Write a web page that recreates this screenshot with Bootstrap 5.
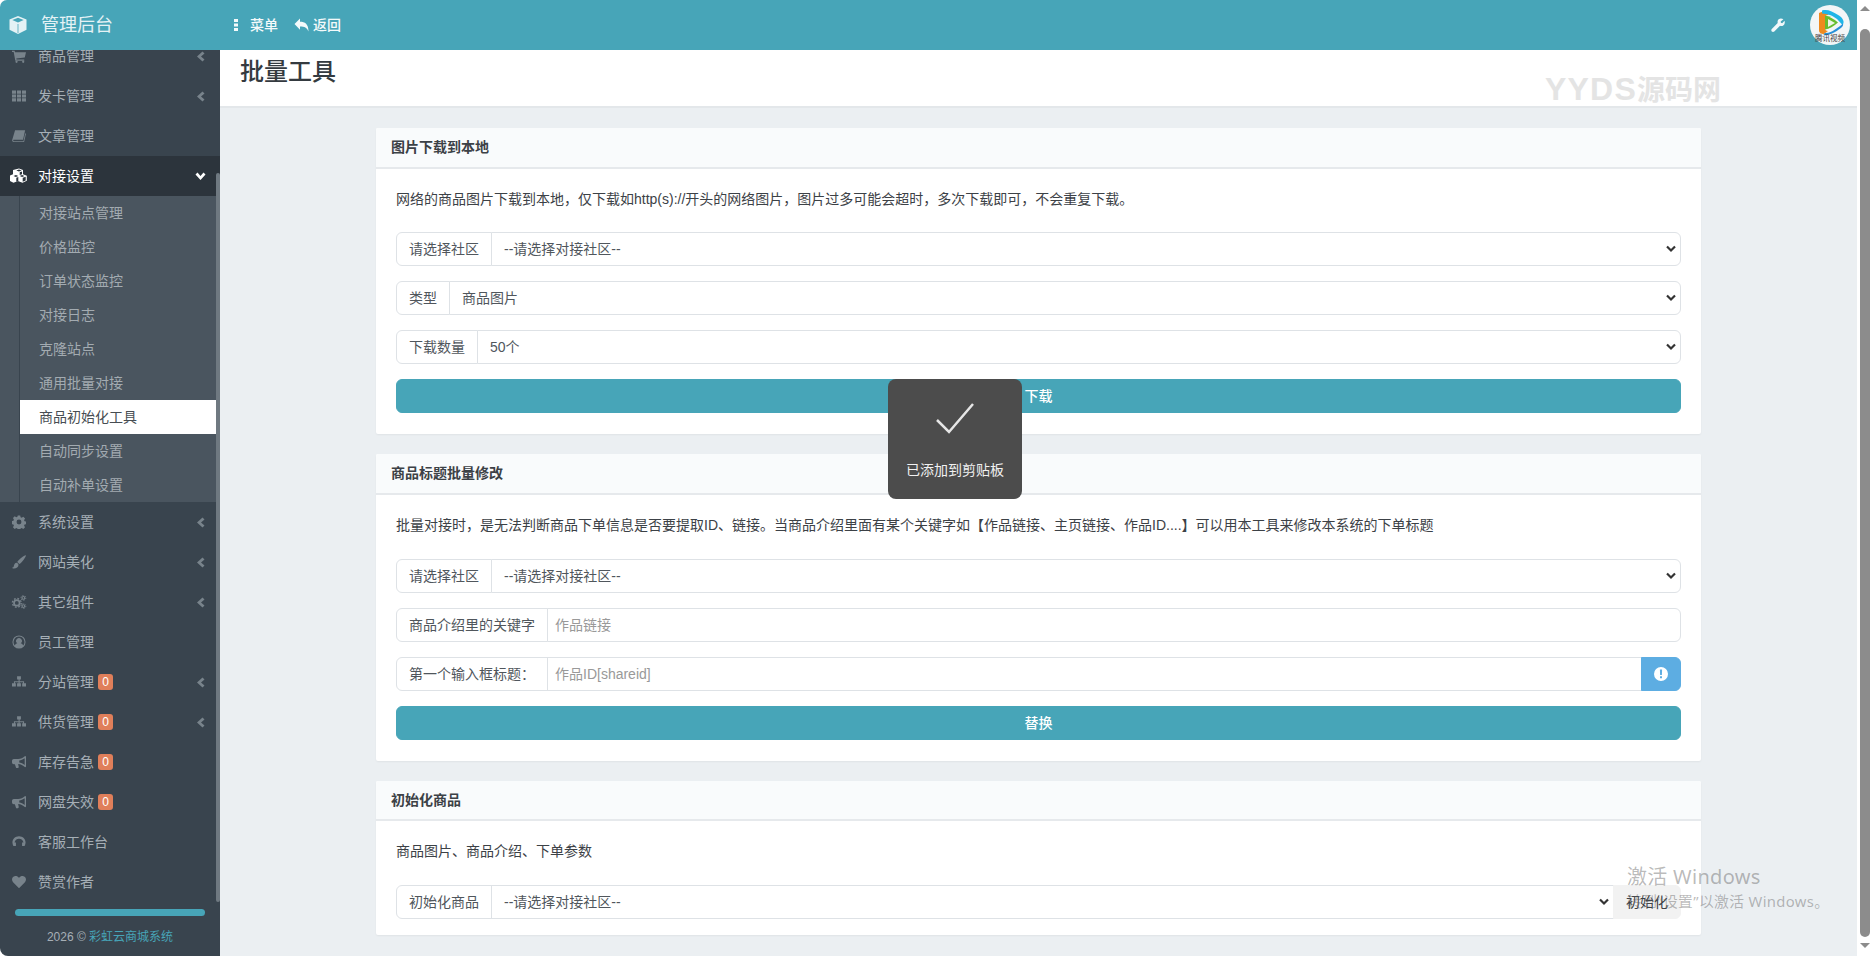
<!DOCTYPE html>
<html lang="zh-CN">
<head>
<meta charset="UTF-8">
<title>批量工具</title>
<link href="https://cdn.jsdelivr.net/npm/bootstrap@5.3.3/dist/css/bootstrap.min.css" rel="stylesheet">
<style>
:root { --bs-border-radius: 4px; }
html, body { height: 956px; overflow: hidden; }
body { background: #fff; font-family: "Liberation Sans", "Noto Sans CJK SC", sans-serif; font-size: 14px; color: #3c4146; }
.app-shell { height: 956px; }
.app-main { width: 1857px; height: 956px; background: #ebeff2; position: relative; overflow: hidden; border-top-left-radius: 7px; border-bottom-left-radius: 8px; }

/* top bar */
.top-bar { height: 50px; background: #47a5b8; color: #f2f8fa; }
.brand-box { width: 220px; padding-left: 8px; gap: 13px; font-size: 18px; color: #e4f2f5; }
.top-link { color: #f4fafb; text-decoration: none; font-size: 14px; font-weight: 500; }
.top-ico { fill: currentColor; display: block; }
.avatar-pic { width: 40px; height: 40px; display: block; margin: 0 7px 0 25px; }

/* side menu */
.side-col { width: 220px; background: #39444e; position: relative; overflow: hidden; }
.side-inner { margin-top: -14px; }
.side-item { height: 40px; color: #a6afb6; text-decoration: none; padding-left: 12px; padding-right: 15px; gap: 12px; }
.side-item.is-open { background: #2c343c; color: #fff; }
.side-ico { width: 14px; height: 14px; fill: #78838b; flex: none; }
.side-ico.wide-ico { width: 16px; margin-left: -1px; margin-right: -1px; }
.is-open .side-ico { width: 18px; height: 16px; fill: #fff; margin-left: -2px; margin-right: -2px; }
.side-arrow { width: 9px; height: 11px; fill: #78838b; margin-left: auto; margin-right: 0; }
.is-open .side-arrow { width: 11px; height: 9px; fill: #fff; margin-right: -1px; }
.side-num { background: #e07f5a; color: #fff; font-size: 12px; line-height: 16px; width: 15px; text-align: center; border-radius: 3px; margin-left: -8px; padding: 0; font-weight: 400; }
.sub-menu { background: #4a555f; padding-left: 19px; }
.sub-list { border-left: 1px solid #39444e; }
.sub-item { height: 34px; line-height: 34px; padding-left: 19px; color: #a3abb1; text-decoration: none; display: block; }
.sub-item.is-current { background: #fff; color: #474d52; border-right: 4px solid #47a5b8; }
.side-bar-line { height: 7px; background: #47a5b8; border-radius: 4px; margin: 7px 15px 0; }
.side-foot { text-align: center; font-size: 12px; color: #a6afb6; margin-top: 12px; }
.side-foot a { color: #47a5b8; text-decoration: none; }
.side-thumb { position: absolute; left: 216px; top: 123px; width: 4px; height: 729px; background: #6f7981; border-radius: 2px; }

/* content */
.page-title { height: 58px; background: #fff; border-bottom: 2px solid #e3e7ea; padding: 6px 0 0 20px; }
.page-title h1 { font-size: 24px; line-height: 32px; font-weight: 500; color: #343a40; margin: 0; }
.mark-text { position: absolute; left: 1545px; top: 69px; font-size: 28px; line-height: 40px; font-weight: 700; color: #e4e4e4; }
.mark-text span { font-size: 32px; letter-spacing: 1.2px; }
.tool-wrap { width: 1325px; margin: 20px auto 0; gap: 20px; }
.tool-card { border: 0; border-radius: 2px; box-shadow: 0 1px 2px rgba(0,0,0,.05); }
.tool-card .card-header { height: 41px; padding: 0 15px; line-height: 39px; background: #f9fbfc; border-bottom: 2px solid #e6e9ec; border-radius: 2px 2px 0 0; font-weight: 700; color: #3c4146; }
.tool-card .card-body { padding: 20px 20px 21px; }
.tool-note { line-height: 21px; margin-bottom: 22px; color: #3c4146; }
.tool-line { height: 34px; margin-bottom: 15px; flex-wrap: nowrap; }
.tool-line .input-group-text { padding: 0 12px; background: #fff; color: #50565c; font-size: 14px; border-color: #dee2e6; }
.tool-line .form-select { padding: 0 12px; font-size: 14px; color: #50565c; border-color: #dee2e6; background-position: right 4px center; background-size: 10px 8px; background-image: url("data:image/svg+xml,%3csvg xmlns='http://www.w3.org/2000/svg' viewBox='0 0 10 8'%3e%3cpath fill='none' stroke='%23333' stroke-width='2.2' d='M1 1.500l4 4 4-4'/%3e%3c/svg%3e"); }
.tool-line .form-control { padding: 0 7px; font-size: 14px; border-color: #dee2e6; }
.tool-line .form-control::placeholder { color: #999; }
.teal-btn { height: 34px; padding: 0; background: #47a5b8; border-color: #47a5b8; color: #fff; font-size: 14px; font-weight: 500; }
.info-btn { width: 40px; padding: 0; background: #5dade2; border-color: #5dade2; color: #fff; }
.grey-btn { width: 68px; padding: 0; background: #f2f2f2; border-color: #f2f2f2; color: #3c4146; font-size: 14px; }
.mid-body .tool-note, .last-body .tool-note { margin-bottom: 23px; }
.last-card .card-header { height: 40px; line-height: 38px; }
.last-body { padding-bottom: 16px !important; }
.last-body .tool-line { margin-bottom: 0; }

/* overlays */
.copy-toast { position: absolute; left: 888px; top: 379px; width: 134px; height: 120px; background: #4c4c4c; border-radius: 8px; color: #fff; text-align: center; z-index: 5; }
.copy-toast svg { display: block; margin: 22px auto 0; }
.copy-toast span { display: block; margin-top: 23px; line-height: 20px; color: #f1f1f1; }
.win-mark { position: absolute; left: 1627px; top: 862px; color: rgba(90,90,90,.42); font-family: "Noto Sans", "Noto Sans CJK SC", sans-serif; z-index: 6; pointer-events: none; white-space: nowrap; }
.win-mark b { display: block; font-weight: 400; font-size: 20px; line-height: 30px; letter-spacing: .3px; }
.win-mark i { display: block; font-style: normal; font-size: 14.8px; line-height: 20px; margin-top: -1px; letter-spacing: .35px; }

/* page scrollbar */
.page-scroll { width: 15px; height: 956px; background: #fff; position: relative; }
.scroll-thumb { position: absolute; left: 3px; top: 29px; width: 10px; height: 908px; background: #8c8c8c; border-radius: 5px; }
.scroll-up, .scroll-down { position: absolute; left: 3px; width: 0; height: 0; border-left: 5px solid transparent; border-right: 5px solid transparent; }
.scroll-up { top: 6px; border-bottom: 5px solid #8c8c8c; }
.scroll-down { top: 943px; border-top: 5px solid #8c8c8c; }
</style>
</head>
<body>
<svg width="0" height="0" class="position-absolute">
  <symbol id="i-cart" viewBox="0 0 16 16"><path d="M0 2h3l.4 1.600H16l-1.400 6.200-9.700 1 .3 1.200H14v1.400H3.800L1.900 3.400H0z"/><circle cx="5.200" cy="14.600" r="1.300"/><circle cx="12.800" cy="14.600" r="1.300"/></symbol>
  <symbol id="i-grid" viewBox="0 0 16 16"><path d="M0 1.800h4.600v3.600H0zM5.700 1.800h4.600v3.600H5.700zM11.400 1.800H16v3.600h-4.600zM0 6.200h4.600v3.600H0zM5.700 6.200h4.600v3.600H5.700zM11.400 6.200H16v3.600h-4.600zM0 10.600h4.600v3.600H0zM5.700 10.600h4.600v3.600H5.700zM11.400 10.600H16v3.600h-4.600z"/></symbol>
  <symbol id="i-book" viewBox="0 0 16 16"><path d="M3.500 1.500H15l-2.400 10.700H2.200c-.6 0-1 .5-.8 1 .1.400.5.700 1 .7h10.700l2-9 .9.400-2.200 9.600H2.200C1 15 0 14 .2 12.600z"/></symbol>
  <symbol id="i-cubes" viewBox="0 0 18 16"><path d="M9 .5l4 1.500v4.300l3.800 1.400v5l-4.300 2-4-1.500-.5-.3-.5.3-4 1.500-4.300-2v-5L3 6.300V2z"/><path d="M6.300 2.500L9 3.500l2.700-1L9 1.500zM9.700 7V4.300l2.300-.9v2.800zM3.500 8l2.400 1 2.400-1-2.400-.9zM9.700 8l2.400 1 2.400-1-2.400-.9zM6.300 13.700v-3.900l2-.8v3.900zM12.700 13.700v-3.900l3-1.100v3.800z" fill="#2c343c"/></symbol>
  <symbol id="i-cog" viewBox="0 0 16 16"><path fill-rule="evenodd" d="M6.600 1h2.800l.4 2 1.300.6 1.800-1.100 2 2-1.100 1.800.6 1.300 2 .4v2.800l-2 .4-.6 1.300 1.100 1.800-2 2-1.800-1.100-1.300.6-.4 2H6.600l-.4-2-1.300-.6-1.800 1.100-2-2 1.100-1.800-.6-1.300-2-.4V7.400l2-.4.6-1.300-1.100-1.800 2-2 1.800 1.100 1.300-.6zM8 5.600a2.800 2.800 0 100 5.600 2.800 2.800 0 000-5.600z" transform="translate(0 -.4)"/></symbol>
  <symbol id="i-brush" viewBox="0 0 16 16"><path d="M15.800.3c.4.400-.7 3-2.700 5.400C11.600 7.500 9.700 9.700 8.400 10.400L6 8c.7-1.300 2.900-3.300 4.700-4.800C13 1.200 15.400-.100 15.800.3zM5.200 8.800c1.100.3 2 1.100 2.200 2.300.2 2.600-2.500 4.400-5 4.400-1 0-1.800-.3-2.400-1 1.200 0 2-.6 2.100-1.800.2-2 1.500-3.700 3.100-3.900z"/></symbol>
  <symbol id="i-cogs" viewBox="0 0 17 16"><g fill="none" stroke="#78838b"><circle cx="6" cy="9" r="3.200" stroke-width="2"/><circle cx="6" cy="9" r="5" stroke-width="1.600" stroke-dasharray="2 1.930"/><circle cx="13.500" cy="3.300" r="1.600" stroke-width="1.300"/><circle cx="13.500" cy="3.300" r="2.800" stroke-width="1.100" stroke-dasharray="1.300 1.630"/><circle cx="13.500" cy="12.700" r="1.600" stroke-width="1.300"/><circle cx="13.500" cy="12.700" r="2.800" stroke-width="1.100" stroke-dasharray="1.300 1.630"/></g></symbol>
  <symbol id="i-user" viewBox="0 0 16 16"><path fill-rule="evenodd" d="M8 .5a7.500 7.500 0 110 15 7.500 7.500 0 010-15zm0 1.300a6.200 6.200 0 00-4.800 10.100c.8-1.500 2-2.200 2.800-2.400a3.300 3.300 0 114 0c.8.200 2 .9 2.800 2.400A6.200 6.200 0 008 1.800z"/></symbol>
  <symbol id="i-map" viewBox="0 0 16 16"><path d="M5.800 1.500h4.400v3.700H8.700v2h5.100v2.300H16V13h-4.400V9.500h1V8.400H8.700v1.100H10.200V13H5.800V9.500h1.700V8.400H3.400v1.100H4.400V13H0V9.500h2.200V7.200h5.300v-2H5.800z"/></symbol>
  <symbol id="i-horn" viewBox="0 0 16 16"><path fill-rule="evenodd" d="M15 1l1 .6v11.800l-1 .6C12.500 11.800 10 10.700 7 10.400l.8 3.700-1 .9H4.700L3.300 10.500H2.100C.9 10.500 0 9.500 0 8.200V6.800c0-1.300.9-2.300 2.100-2.300H7c3 0 5.500-1.300 8-3.500zM14.500 3.700C12.500 5.200 10.300 6 8.300 6.300v2.400c2 .300 4.200 1.100 6.200 2.600z"/></symbol>
  <symbol id="i-phone" viewBox="0 0 16 16"><path d="M8 1.500C3.600 1.500.5 4.700.5 8.700c0 1.400.4 2.700 1.100 3.800h2.900V8.500H2.900C3.300 6 5.400 4.300 8 4.300s4.700 1.700 5.100 4.200h-1.600v4h2.900c.7-1.100 1.100-2.400 1.100-3.800 0-4-3.100-7.200-7.500-7.200z"/></symbol>
  <symbol id="i-heart" viewBox="0 0 16 16"><path d="M8 15L1.500 8.700C-.6 6.500-.4 3.500 1.600 2c2-1.400 4.800-.9 6.400 1.300C9.600 1.100 12.400.6 14.400 2c2 1.500 2.200 4.500.1 6.700z"/></symbol>
  <symbol id="i-left" viewBox="0 0 9 11"><path d="M6.500.5L8.500 2.500 5 5.500l3.500 3-2 2L1 5.500z"/></symbol>
  <symbol id="i-down" viewBox="0 0 11 9"><path d="M.5 2.500L2.500.5l3 3.500 3-3.500 2 2-5 5.500z"/></symbol>
</svg>

<div class="app-shell d-flex">
  <div class="app-main d-flex flex-column">
    <header class="top-bar d-flex align-items-center">
      <div class="brand-box d-flex align-items-center">
        <svg class="top-ico" width="20" height="20" viewBox="0 0 20 20"><path fill-rule="evenodd" d="M10 1l8.500 3.500v10.300L10 19l-8.500-4.200V4.500zM10 2.800L4.300 5.100 10 7.400l5.700-2.300zM9.600 9v9h.8V9z"/></svg>
        <span>管理后台</span>
      </div>
      <a class="top-link d-flex align-items-center" href="#">
        <svg class="top-ico" width="6" height="14" viewBox="0 0 6 14" style="margin-left:13px;margin-right:11px"><path d="M1 1h4v3H1zM1 5.500h4v3H1zM1 10h4v3H1z"/></svg>菜单
      </a>
      <a class="top-link d-flex align-items-center" href="#" style="margin-left:16px">
        <svg class="top-ico me-1" width="15" height="14" viewBox="0 0 15 14"><path d="M6 .5v3.300c5 0 8.500 2.300 8.500 9.700-1.500-4-4-5-8.500-5v3.300L.5 6z"/></svg>返回
      </a>
      <div class="ms-auto d-flex align-items-center">
        <svg class="top-ico" width="14" height="14" viewBox="0 0 14 14"><path d="M9.800.5c1 0 1.900.3 2.600.8L9.700 3.500l.2 1.300 1.300.5 2.300-2.500c.6 1.800.2 3.400-1 4.400-1 .9-2.300 1-3.500.6l-5.700 5.700c-.8.700-1.900.6-2.500 0s-.7-1.700 0-2.500L6.700 5C6.100 3 7.500.5 9.800.5z"/></svg>
        <svg class="avatar-pic" viewBox="0 0 40 40">
          <circle cx="20" cy="20" r="20" fill="#f3f6f7"/>
          <path d="M9 8c4-2 8-2 11-1l-2 3c-2 0-3 1-3 3v10c0 2 1 3 3 3l-4 3c-3 0-5-1-5-4z" fill="#ee8a1e"/>
          <path d="M12 5.500c5-1.500 10 .5 17 5 5 3.500 5.500 7 3.500 9.500L27 14c-4-3-8-5-15-5.500z" fill="#1fb5e8"/>
          <path d="M33 18.500c1 3-3 5.500-8 8.500-4 2.500-8 3.500-11 3l.5-2c4 .5 7-1 10.500-3.500 3-2 6-4 8-6z" fill="#2790d8"/>
          <path d="M15 10.500c4 .5 9 3.500 13 7-4 3.500-9 6.500-13 7z" fill="#67bd2e"/>
          <path d="M18 14l7 4-7 4z" fill="#eef6e8"/>
          <text x="20" y="36" text-anchor="middle" font-size="7.500" fill="#444">腾讯视频</text>
        </svg>
      </div>
    </header>

    <div class="d-flex flex-grow-1">
      <aside class="side-col">
        <div class="side-inner">
          <a class="side-item d-flex align-items-center" href="#"><svg class="side-ico"><use href="#i-cart"/></svg>商品管理<svg class="side-arrow"><use href="#i-left"/></svg></a>
          <a class="side-item d-flex align-items-center" href="#"><svg class="side-ico"><use href="#i-grid"/></svg>发卡管理<svg class="side-arrow"><use href="#i-left"/></svg></a>
          <a class="side-item d-flex align-items-center" href="#"><svg class="side-ico"><use href="#i-book"/></svg>文章管理</a>
          <a class="side-item is-open d-flex align-items-center" href="#"><svg class="side-ico"><use href="#i-cubes"/></svg>对接设置<svg class="side-arrow"><use href="#i-down"/></svg></a>
          <div class="sub-menu">
            <div class="sub-list">
              <a class="sub-item" href="#">对接站点管理</a>
              <a class="sub-item" href="#">价格监控</a>
              <a class="sub-item" href="#">订单状态监控</a>
              <a class="sub-item" href="#">对接日志</a>
              <a class="sub-item" href="#">克隆站点</a>
              <a class="sub-item" href="#">通用批量对接</a>
              <a class="sub-item is-current" href="#">商品初始化工具</a>
              <a class="sub-item" href="#">自动同步设置</a>
              <a class="sub-item" href="#">自动补单设置</a>
            </div>
          </div>
          <a class="side-item d-flex align-items-center" href="#"><svg class="side-ico"><use href="#i-cog"/></svg>系统设置<svg class="side-arrow"><use href="#i-left"/></svg></a>
          <a class="side-item d-flex align-items-center" href="#"><svg class="side-ico"><use href="#i-brush"/></svg>网站美化<svg class="side-arrow"><use href="#i-left"/></svg></a>
          <a class="side-item d-flex align-items-center" href="#"><svg class="side-ico wide-ico"><use href="#i-cogs"/></svg>其它组件<svg class="side-arrow"><use href="#i-left"/></svg></a>
          <a class="side-item d-flex align-items-center" href="#"><svg class="side-ico"><use href="#i-user"/></svg>员工管理</a>
          <a class="side-item d-flex align-items-center" href="#"><svg class="side-ico"><use href="#i-map"/></svg>分站管理<span class="side-num">0</span><svg class="side-arrow"><use href="#i-left"/></svg></a>
          <a class="side-item d-flex align-items-center" href="#"><svg class="side-ico"><use href="#i-map"/></svg>供货管理<span class="side-num">0</span><svg class="side-arrow"><use href="#i-left"/></svg></a>
          <a class="side-item d-flex align-items-center" href="#"><svg class="side-ico"><use href="#i-horn"/></svg>库存告急<span class="side-num">0</span></a>
          <a class="side-item d-flex align-items-center" href="#"><svg class="side-ico"><use href="#i-horn"/></svg>网盘失效<span class="side-num">0</span></a>
          <a class="side-item d-flex align-items-center" href="#"><svg class="side-ico"><use href="#i-phone"/></svg>客服工作台</a>
          <a class="side-item d-flex align-items-center" href="#"><svg class="side-ico"><use href="#i-heart"/></svg>赞赏作者</a>
          <div class="side-bar-line"></div>
          <div class="side-foot">2026 © <a href="#">彩虹云商城系统</a></div>
        </div>
        <div class="side-thumb"></div>
      </aside>

      <main class="flex-grow-1">
        <div class="page-title"><h1>批量工具</h1></div>
        <div class="tool-wrap d-flex flex-column">
          <section class="card tool-card">
            <div class="card-header">图片下载到本地</div>
            <div class="card-body">
              <p class="tool-note">网络的商品图片下载到本地，仅下载如http(s)://开头的网络图片，图片过多可能会超时，多次下载即可，不会重复下载。</p>
              <div class="input-group tool-line"><span class="input-group-text">请选择社区</span><select class="form-select"><option>--请选择对接社区--</option></select></div>
              <div class="input-group tool-line"><span class="input-group-text">类型</span><select class="form-select"><option>商品图片</option></select></div>
              <div class="input-group tool-line"><span class="input-group-text">下载数量</span><select class="form-select"><option>50个</option></select></div>
              <button type="button" class="btn teal-btn w-100">下载</button>
            </div>
          </section>

          <section class="card tool-card">
            <div class="card-header">商品标题批量修改</div>
            <div class="card-body mid-body">
              <p class="tool-note">批量对接时，是无法判断商品下单信息是否要提取ID、链接。当商品介绍里面有某个关键字如【作品链接、主页链接、作品ID....】可以用本工具来修改本系统的下单标题</p>
              <div class="input-group tool-line"><span class="input-group-text">请选择社区</span><select class="form-select"><option>--请选择对接社区--</option></select></div>
              <div class="input-group tool-line"><span class="input-group-text">商品介绍里的关键字</span><input type="text" class="form-control" placeholder="作品链接"></div>
              <div class="input-group tool-line"><span class="input-group-text">第一个输入框标题：</span><input type="text" class="form-control" placeholder="作品ID[shareid]"><button type="button" class="btn info-btn d-flex align-items-center justify-content-center"><svg width="14" height="14" viewBox="0 0 14 14"><path fill="#fff" fill-rule="evenodd" d="M7 0a7 7 0 110 14A7 7 0 017 0zM5.900 2.500l.2 5.500h1.800l.2-5.500zM6 9.200v2h2v-2z"/></svg></button></div>
              <button type="button" class="btn teal-btn w-100">替换</button>
            </div>
          </section>

          <section class="card tool-card last-card">
            <div class="card-header">初始化商品</div>
            <div class="card-body last-body">
              <p class="tool-note">商品图片、商品介绍、下单参数</p>
              <div class="input-group tool-line"><span class="input-group-text">初始化商品</span><select class="form-select"><option>--请选择对接社区--</option></select><button type="button" class="btn grey-btn">初始化</button></div>
            </div>
          </section>
        </div>
      </main>
    </div>

    <div class="mark-text"><span>YYDS</span>源码网</div>

    <div class="copy-toast">
      <svg width="40" height="36" viewBox="0 0 40 36"><path d="M2 19l12 12L38 3" fill="none" stroke="#e6e6e6" stroke-width="2.500"/></svg>
      <span>已添加到剪贴板</span>
    </div>

    <div class="win-mark"><b>激活 Windows</b><i>转到“设置”以激活 Windows。</i></div>
  </div>

  <div class="page-scroll">
    <div class="scroll-up"></div>
    <div class="scroll-thumb"></div>
    <div class="scroll-down"></div>
  </div>
</div>
<script src="https://cdn.jsdelivr.net/npm/bootstrap@5.3.3/dist/js/bootstrap.bundle.min.js"></script>
</body>
</html>
